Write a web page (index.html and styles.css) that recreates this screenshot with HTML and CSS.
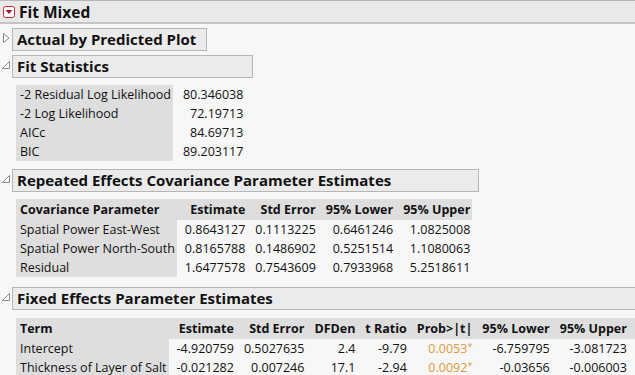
FILE: index.html
```html
<!DOCTYPE html>
<html lang="en">
<head>
  <meta charset="UTF-8" />
  <title>Fit Mixed</title>
  <link rel="stylesheet" href="styles.css">
</head>
<body>
  <div class="report-title">
    <svg class="menu-icon" width="12" height="12" viewBox="0 0 12 12">
      <rect x="0.5" y="0.5" width="11" height="11" rx="2" fill="#fff" stroke="#c4283a"/>
      <path d="M2.5 4 L9.5 4 L6 8 Z" fill="#b0182a"/>
    </svg>
    <span>Fit Mixed</span>
  </div>

  <div class="report-body">
    <!-- closed outline -->
    <div class="outline-row">
      <svg class="toggle" width="10" height="12" viewBox="0 0 10 12">
        <path d="M2.5 1.5 L8 6 L2.5 10.5 Z" fill="#fff" stroke="#8a8a8a"/>
      </svg>
      <div class="outline">
        <div class="outline-head closed">Actual by Predicted Plot</div>
      </div>
    </div>

    <!-- Fit Statistics -->
    <div class="outline-row">
      <svg class="toggle" width="10" height="12" viewBox="0 0 10 12">
        <path d="M1.5 9.5 L8.5 9.5 L8.5 2.5 Z" fill="#fff" stroke="#8a8a8a"/>
      </svg>
      <div class="outline">
        <div class="outline-head">Fit Statistics</div>
        <div class="outline-body stats-body">
          <table class="stats">
            <tr><td class="lbl">-2 Residual Log Likelihood</td><td>80.346038</td></tr>
            <tr><td class="lbl">-2 Log Likelihood</td><td>72.19713</td></tr>
            <tr><td class="lbl">AICc</td><td>84.69713</td></tr>
            <tr><td class="lbl">BIC</td><td>89.203117</td></tr>
          </table>
        </div>
      </div>
    </div>

    <!-- Covariance -->
    <div class="outline-row">
      <svg class="toggle" width="10" height="12" viewBox="0 0 10 12">
        <path d="M1.5 9.5 L8.5 9.5 L8.5 2.5 Z" fill="#fff" stroke="#8a8a8a"/>
      </svg>
      <div class="outline">
        <div class="outline-head">Repeated Effects Covariance Parameter Estimates</div>
        <div class="outline-body">
          <table class="grid cov">
            <tr>
              <th class="lbl">Covariance Parameter</th>
              <th>Estimate</th><th>Std Error</th><th>95% Lower</th><th>95% Upper</th>
            </tr>
            <tr><td class="lbl">Spatial Power East-West</td><td>0.8643127</td><td>0.1113225</td><td>0.6461246</td><td>1.0825008</td></tr>
            <tr><td class="lbl">Spatial Power North-South</td><td>0.8165788</td><td>0.1486902</td><td>0.5251514</td><td>1.1080063</td></tr>
            <tr><td class="lbl">Residual</td><td>1.6477578</td><td>0.7543609</td><td>0.7933968</td><td>5.2518611</td></tr>
          </table>
        </div>
      </div>
    </div>

    <!-- Fixed effects -->
    <div class="outline-row">
      <svg class="toggle" width="10" height="12" viewBox="0 0 10 12">
        <path d="M1.5 9.5 L8.5 9.5 L8.5 2.5 Z" fill="#fff" stroke="#8a8a8a"/>
      </svg>
      <div class="outline">
        <div class="outline-head">Fixed Effects Parameter Estimates</div>
        <div class="outline-body fixed-body">
          <table class="grid fixed">
            <tr>
              <th class="lbl">Term</th>
              <th>Estimate</th><th>Std Error</th><th>DFDen</th><th>t Ratio</th><th class="prob">Prob&gt;|t|</th><th>95% Lower</th><th>95% Upper</th>
            </tr>
            <tr><td class="lbl">Intercept</td><td>-4.920759</td><td>0.5027635</td><td>2.4</td><td>-9.79</td><td class="prob sig">0.0053<sup>*</sup></td><td>-6.759795</td><td>-3.081723</td></tr>
            <tr><td class="lbl">Thickness of Layer of Salt</td><td>-0.021282</td><td>0.007246</td><td>17.1</td><td>-2.94</td><td class="prob sig">0.0092<sup>*</sup></td><td>-0.03656</td><td>-0.006003</td></tr>
          </table>
        </div>
      </div>
    </div>
  </div>
</body>
</html>
```

FILE: styles.css
```css
body {
  margin: 0;
  background-color: #f7f7f7;
  font-family: "Open Sans", "Noto Sans", sans-serif;
  color: #111;
  overflow: hidden;
}

.report-title {
  display: flex;
  align-items: center;
  gap: 4px;
  height: 21px;
  padding-left: 3px;
  background-color: #e9e9e9;
  border-top: 1px solid #b8b8b8;
  border-bottom: 2px solid #c4c4c4;
  font-size: 15.5px;
  font-weight: bold;
  white-space: nowrap;
}

.menu-icon {
  flex: none;
}

.report-body {
  padding-top: 4px;
}

.outline-row {
  display: flex;
  align-items: flex-start;
  margin-bottom: 4px;
}

.toggle {
  flex: none;
  width: 12px;
  margin-top: 4px;
}

.outline {
  display: inline-flex;
  flex-direction: column;
}

.outline-head {
  height: 21px;
  line-height: 21px;
  padding-left: 4px;
  background-color: #ebebeb;
  border: 1px solid #b6b6b6;
  font-size: 15px;
  font-weight: bold;
  white-space: nowrap;
}

.outline-head.closed {
  padding-right: 10px;
}

.outline-body {
  padding: 7px 7px 6px 4px;
}

.stats-body {
  padding-bottom: 4px;
}

.fixed-body {
  padding-top: 8px;
}

table {
  border-collapse: collapse;
  font-size: 12.5px;
  white-space: nowrap;
}

td, th {
  padding: 0 2px 0 8px;
  height: 19px;
  line-height: 19px;
  text-align: right;
}

td.lbl, th.lbl {
  text-align: left;
  background-color: #dedede;
  padding-left: 4px;
  padding-right: 2px;
}

.stats td {
  padding-left: 10px;
  padding-right: 3px;
}

.stats td.lbl {
  padding-left: 4px;
  padding-right: 2px;
}

.grid th {
  background-color: #dedede;
  font-weight: bold;
  height: 21px;
  line-height: 21px;
}

.fixed th:last-child,
.fixed td:last-child {
  padding-right: 10px;
}

.sig {
  color: #e09a3a;
}

.sig sup {
  font-size: 9px;
  vertical-align: 3px;
  line-height: 0;
}
```
